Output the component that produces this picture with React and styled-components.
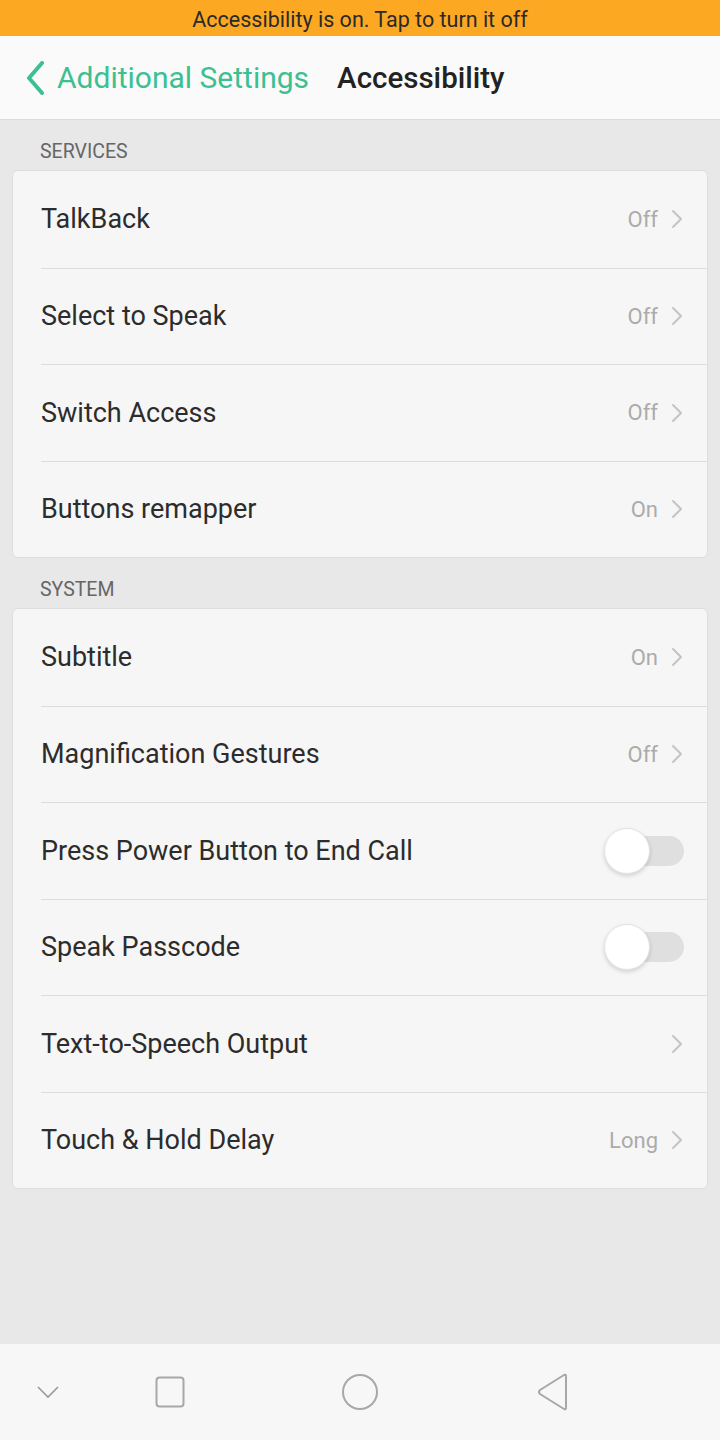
import React from 'react'
import styled, { createGlobalStyle } from 'styled-components'

const Global = createGlobalStyle`
  html, body { margin: 0; padding: 0; }
  body {
    background: #e8e8e8;
    font-family: Roboto, "Noto Sans", "Liberation Sans", sans-serif;
  }
`

const Screen = styled.div`
  width: 720px;
  height: 1440px;
  display: flex;
  flex-direction: column;
  background: #e8e8e8;
  overflow: hidden;
`

const Banner = styled.div`
  height: 36px;
  background: #fca823;
  color: #2a2a2a;
  font-size: 21.5px;
  display: flex;
  align-items: center;
  justify-content: center;
  padding-top: 2px;
  box-sizing: border-box;
`

const Header = styled.div`
  height: 84px;
  background: #fafafa;
  border-bottom: 1px solid #dcdcdc;
  display: flex;
  align-items: center;
  padding-left: 25px;
  box-sizing: border-box;
`

const Back = styled.div`
  display: flex;
  align-items: center;
  color: #3cc091;
  font-size: 30px;
  gap: 12px;
`

const Title = styled.div`
  margin-left: 28px;
  font-size: 29.5px;
  font-weight: 500;
  color: #222;
`

const Content = styled.div`
  flex: 1;
  padding: 0 12px;
  display: flex;
  flex-direction: column;
`

const SectionLabel = styled.div`
  font-size: 19.5px;
  color: #666;
  padding-left: 28px;
  height: 50px;
  display: flex;
  align-items: center;
  padding-top: 12px;
  box-sizing: border-box;
`

const Card = styled.div`
  background: #f6f6f6;
  border: 1px solid #dedede;
  border-radius: 6px;
  overflow: hidden;
`

const Row = styled.div`
  height: 96.5px;
  margin-left: 28px;
  padding-right: 24px;
  display: flex;
  align-items: center;
  border-top: ${p => (p.first ? 'none' : '1px solid #dcdcdc')};
  box-sizing: border-box;
`

const Label = styled.div`
  flex: 1;
  font-size: 27px;
  color: #2c2c2c;
`

const Value = styled.div`
  font-size: 22px;
  color: #ababab;
  margin-right: 13px;
`

const Toggle = styled.div`
  position: relative;
  width: 80px;
  height: 46px;
  margin-right: -1px;
  &::before {
    content: '';
    position: absolute;
    right: 0;
    top: 8px;
    width: 62px;
    height: 30px;
    border-radius: 15px;
    background: #dfdfdf;
  }
  &::after {
    content: '';
    position: absolute;
    left: 0;
    top: 0;
    width: 44px;
    height: 44px;
    border-radius: 50%;
    background: #fff;
    border: 1px solid #e4e4e4;
    box-shadow: 0 2px 4px rgba(0, 0, 0, 0.15);
  }
`

const Nav = styled.div`
  height: 96px;
  background: #f7f7f7;
  display: grid;
  grid-template-columns: 96px 148px 232px 154px 1fr;
  align-items: center;
`

const NavCell = styled.div`
  display: flex;
  justify-content: center;
`

const Chevron = () => (
  <svg width="12" height="20" viewBox="0 0 12 20">
    <path d="M2 2 L10 10 L2 18" fill="none" stroke="#c4c4c4" strokeWidth="2" strokeLinecap="round" strokeLinejoin="round" />
  </svg>
)

const BackChevron = () => (
  <svg width="20" height="34" viewBox="0 0 20 34">
    <path d="M17 2 L4 17 L17 32" fill="none" stroke="#3cc091" strokeWidth="4" strokeLinecap="round" strokeLinejoin="round" />
  </svg>
)

const SettingRow = ({ label, value, toggle, chevron = true, first }) => (
  <Row first={first}>
    <Label>{label}</Label>
    {toggle ? (
      <Toggle />
    ) : (
      <>
        {value && <Value>{value}</Value>}
        {chevron && <Chevron />}
      </>
    )}
  </Row>
)

const services = [
  { label: 'TalkBack', value: 'Off' },
  { label: 'Select to Speak', value: 'Off' },
  { label: 'Switch Access', value: 'Off' },
  { label: 'Buttons remapper', value: 'On' },
]

const system = [
  { label: 'Subtitle', value: 'On' },
  { label: 'Magnification Gestures', value: 'Off' },
  { label: 'Press Power Button to End Call', toggle: true },
  { label: 'Speak Passcode', toggle: true },
  { label: 'Text-to-Speech Output' },
  { label: 'Touch & Hold Delay', value: 'Long' },
]

const App = () => (
  <Screen>
    <Global />
    <Banner>Accessibility is on. Tap to turn it off</Banner>
    <Header>
      <Back>
        <BackChevron />
        Additional Settings
      </Back>
      <Title>Accessibility</Title>
    </Header>
    <Content>
      <SectionLabel>SERVICES</SectionLabel>
      <Card>
        {services.map((s, i) => <SettingRow key={s.label} first={i === 0} {...s} />)}
      </Card>
      <SectionLabel>SYSTEM</SectionLabel>
      <Card>
        {system.map((s, i) => <SettingRow key={s.label} first={i === 0} {...s} />)}
      </Card>
    </Content>
    <Nav>
      <NavCell>
        <svg width="24" height="14" viewBox="0 0 24 14">
          <path d="M2 2 L12 12 L22 2" fill="none" stroke="#9a9a9a" strokeWidth="1.6" />
        </svg>
      </NavCell>
      <NavCell>
        <svg width="30" height="32" viewBox="0 0 30 32">
          <rect x="1.5" y="1.5" width="27" height="29" rx="3" fill="none" stroke="#a8a8a8" strokeWidth="2" />
        </svg>
      </NavCell>
      <NavCell>
        <svg width="38" height="38" viewBox="0 0 38 38">
          <circle cx="19" cy="19" r="17" fill="none" stroke="#a8a8a8" strokeWidth="2" />
        </svg>
      </NavCell>
      <NavCell>
        <svg width="34" height="38" viewBox="0 0 34 38">
          <path d="M30 3 L30 35 Q30 37 28 36 L4 21 Q2 19 4 17 L28 2 Q30 1 30 3 Z" fill="none" stroke="#a8a8a8" strokeWidth="2" strokeLinejoin="round" />
        </svg>
      </NavCell>
    </Nav>
  </Screen>
)

export default App
